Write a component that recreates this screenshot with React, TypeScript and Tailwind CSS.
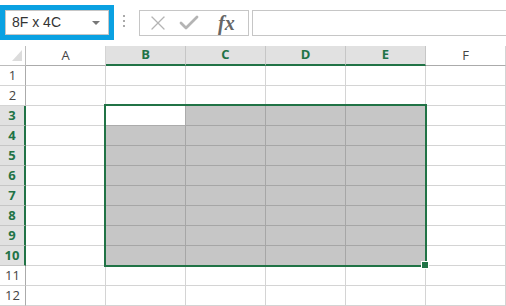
import { X, Check } from 'lucide-react'

const COLS = ['A', 'B', 'C', 'D', 'E', 'F']
const ROWS = [1, 2, 3, 4, 5, 6, 7, 8, 9, 10, 11, 12]
const GREEN = 'text-[#217346]'

const inSel = (r: number, c: number) => r >= 3 && r <= 10 && c >= 1 && c <= 4

export default function App() {
  return (
    <div className="w-[506px] h-[306px] overflow-hidden bg-white font-['Open_Sans',sans-serif] text-[13px] text-[#444]">
      {/* formula bar */}
      <div className="h-[46px] flex items-start">
        <div className="mt-[5px] w-[114px] h-[35px] shrink-0 border-[5px] border-[#0aa1e2]">
          <div className="h-full border border-[#c6c6c6] flex items-center pl-[6px] pr-[8px]">
            <span className="flex-1 text-[#333] font-['Liberation_Sans',sans-serif] text-[14px]">8F x 4C</span>
            <span className="w-0 h-0 border-l-[4px] border-r-[4px] border-t-[4px] border-l-transparent border-r-transparent border-t-[#777]" />
          </div>
        </div>
        <div className="ml-[9px] mt-[15px] flex flex-col gap-[3px]">
          <span className="w-[2px] h-[2px] bg-[#aaa]" />
          <span className="w-[2px] h-[2px] bg-[#aaa]" />
          <span className="w-[2px] h-[2px] bg-[#aaa]" />
        </div>
        <div className="ml-[14px] mt-[10px] w-[110px] h-[26px] shrink-0 border border-[#c6c6c6] flex items-center">
          <X className="ml-[6px] w-[24px] h-[24px] text-[#b4b4b4]" strokeWidth={1.3} />
          <Check className="ml-[7px] w-[24px] h-[24px] text-[#b4b4b4]" strokeWidth={2.8} />
          <span className="ml-[17px] font-['Liberation_Serif',serif] italic font-bold text-[20px] text-[#666] leading-none">fx</span>
        </div>
        <div className="ml-[3px] mt-[10px] flex-1 h-[26px] border border-[#c6c6c6] border-r-0" />
      </div>

      {/* sheet */}
      <div className="relative grid grid-cols-[26px_repeat(6,80px)] grid-rows-[20px_repeat(12,20px)]">
        <div className="relative border-r border-b border-[#bcbcbc]">
          <svg className="absolute left-[12px] top-[4px]" width="10" height="11" viewBox="0 0 10 11">
            <polygon points="10,0 10,11 0,11" fill="#dcdcdc" />
          </svg>
        </div>
        {COLS.map((c, i) => {
          const sel = i >= 1 && i <= 4
          return (
            <div
              key={c}
              className={`flex items-center justify-center border-r ${
                sel
                  ? `bg-[#e1e1e1] border-r-[#c6c6c6] border-b-2 border-b-[#217346] font-bold ${GREEN}`
                  : 'border-r-[#d4d4d4] border-b border-b-[#ababab]'
              }`}
            >
              {c}
            </div>
          )
        })}

        {ROWS.map((r) => {
          const sel = r >= 3 && r <= 10
          return [
            <div
              key={`h${r}`}
              className={`flex items-center justify-center border-b ${
                sel
                  ? `bg-[#e1e1e1] border-b-[#c6c6c6] border-r-2 border-r-[#217346] font-bold ${GREEN}`
                  : 'border-b-[#d4d4d4] border-r border-r-[#ababab]'
              }`}
            >
              {r}
            </div>,
            ...COLS.map((c, i) => {
              const s = inSel(r, i)
              const active = r === 3 && i === 1
              return (
                <div
                  key={`${c}${r}`}
                  className={`border-r border-b ${
                    active ? 'bg-white border-[#ababab]' : s ? 'bg-[#c6c6c6] border-[#a6a6a6]' : 'border-[#d4d4d4]'
                  }`}
                />
              )
            }),
          ]
        })}

        {/* selection outline: absolute grid child, so it takes no part in auto placement */}
        <div className="absolute inset-0 col-start-3 col-end-7 row-start-4 row-end-12 pointer-events-none">
          <div className="absolute -top-[2px] -left-[2px] -right-[1px] -bottom-[1px] border-2 border-[#217346]" />
          <div className="absolute -right-[3px] -bottom-[3px] w-[8px] h-[8px] bg-[#217346] border border-white" />
        </div>
      </div>
    </div>
  )
}
